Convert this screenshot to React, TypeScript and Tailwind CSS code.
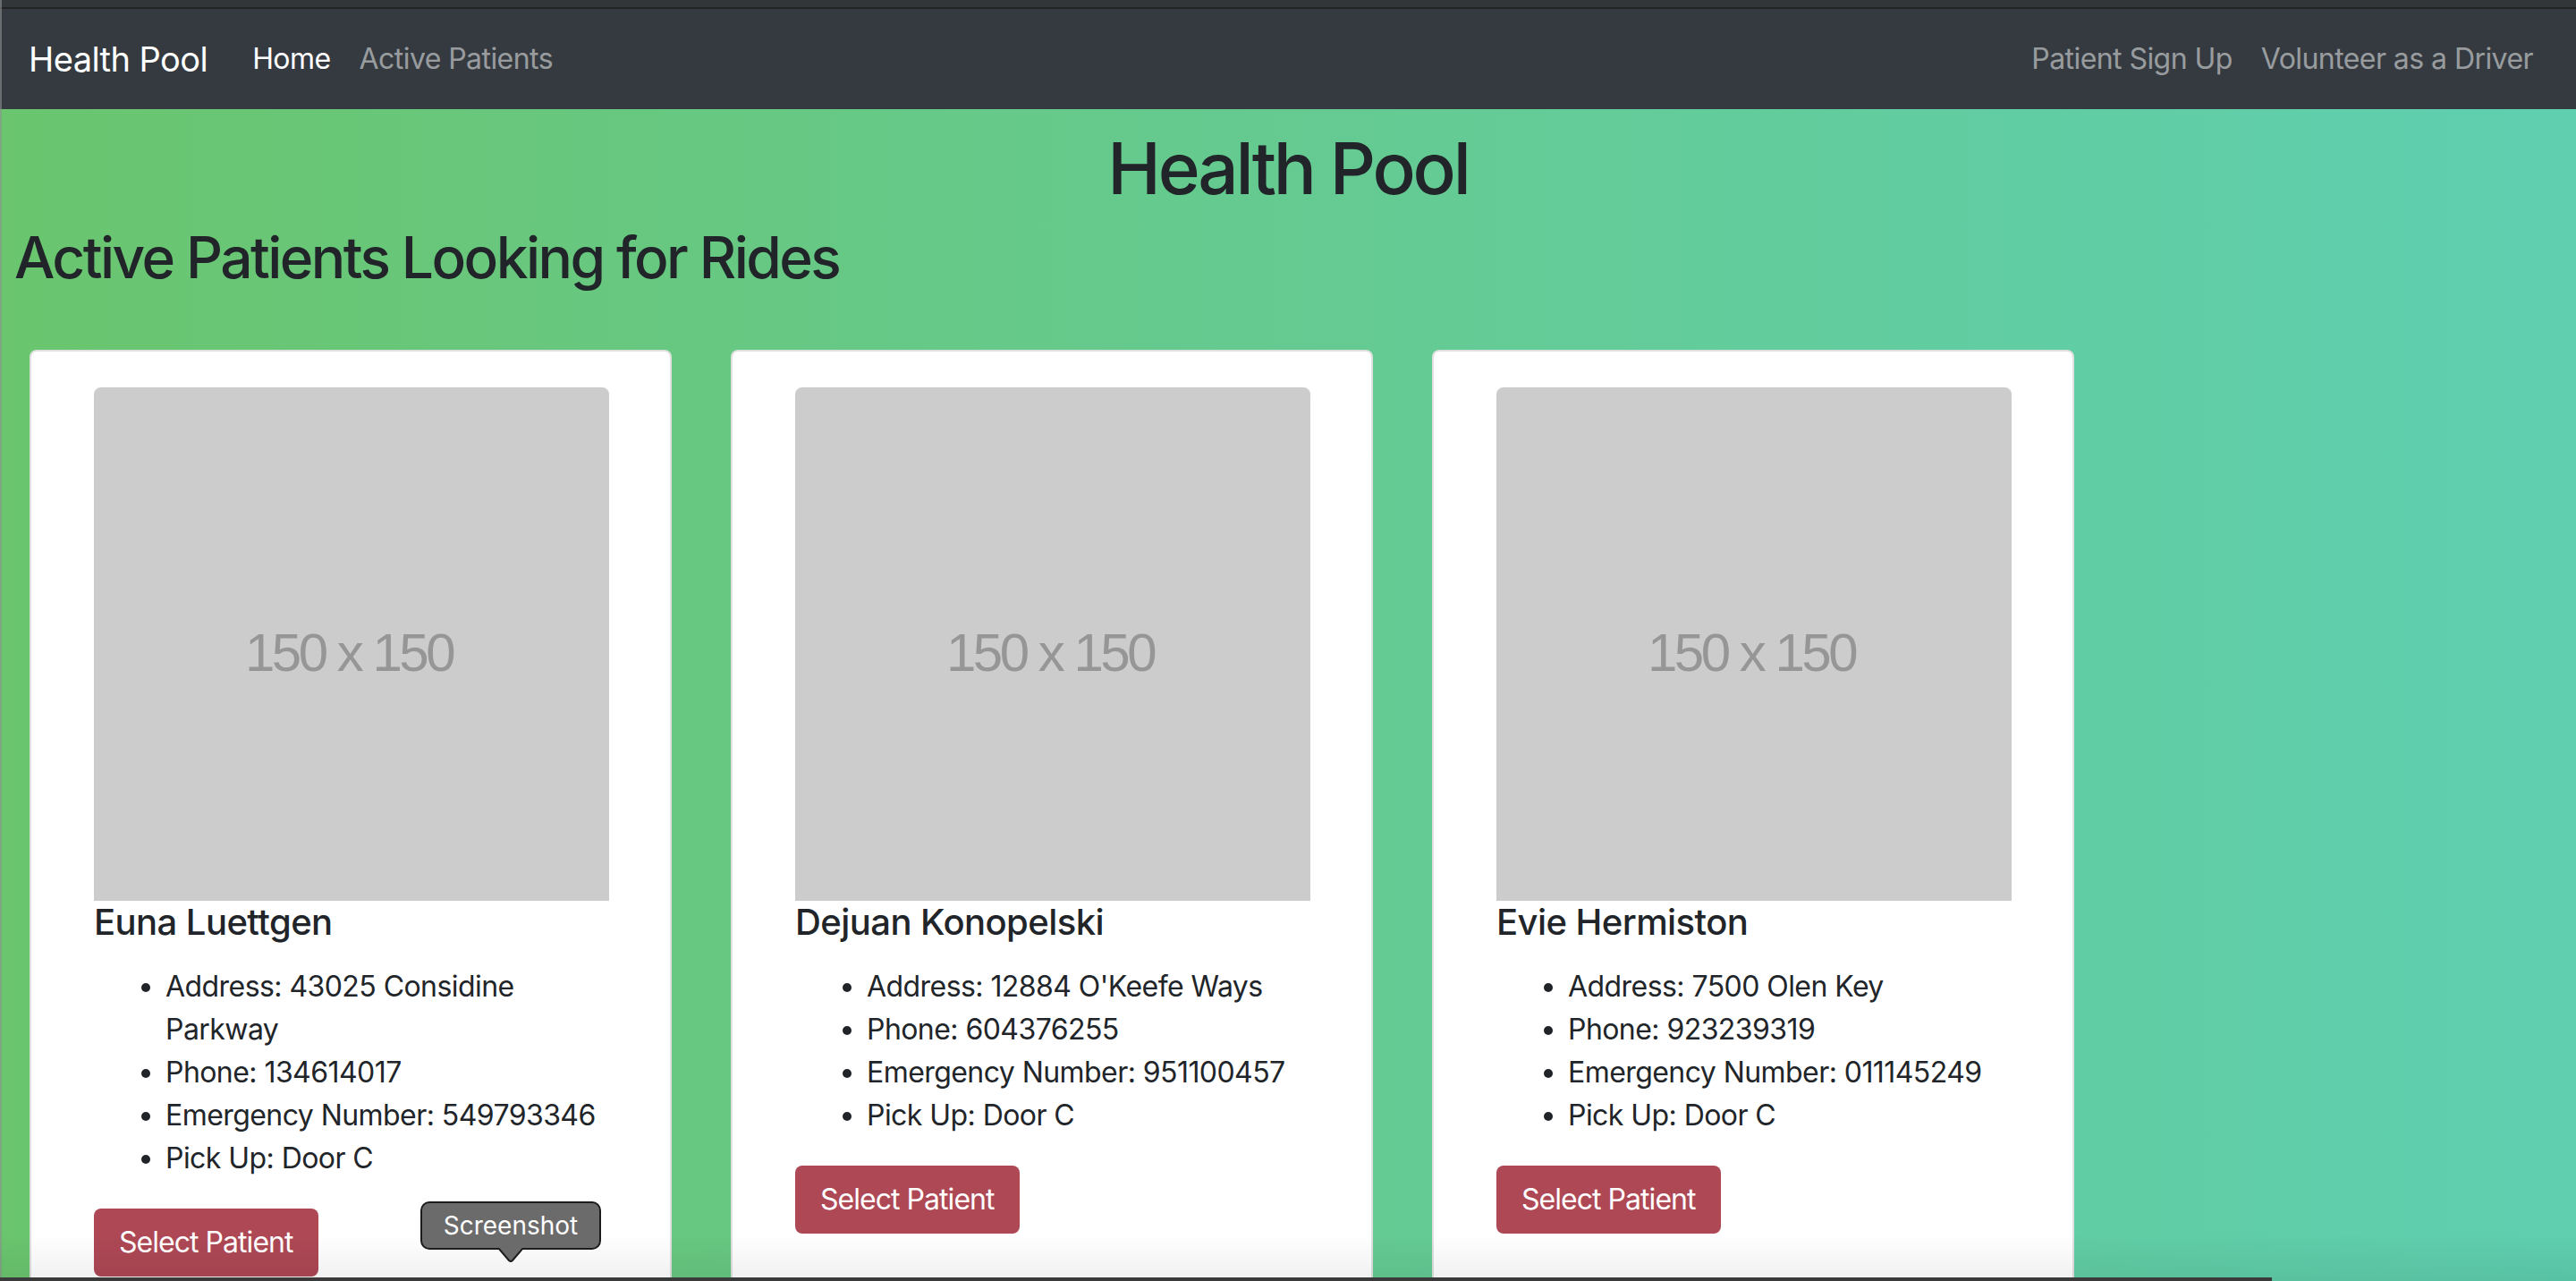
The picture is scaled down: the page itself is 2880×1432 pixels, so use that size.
import React from "react";

type Patient = {
  name: string;
  address: string;
  phone: string;
  emergency: string;
  pickup: string;
};

const patients: Patient[] = [
  {
    name: "Euna Luettgen",
    address: "43025 Considine Parkway",
    phone: "134614017",
    emergency: "549793346",
    pickup: "Door C",
  },
  {
    name: "Dejuan Konopelski",
    address: "12884 O'Keefe Ways",
    phone: "604376255",
    emergency: "951100457",
    pickup: "Door C",
  },
  {
    name: "Evie Hermiston",
    address: "7500 Olen Key",
    phone: "923239319",
    emergency: "011145249",
    pickup: "Door C",
  },
];

function PatientCard({ patient }: { patient: Patient }) {
  return (
    <div className="w-[718px] shrink-0 rounded-[8px] border-2 border-black/[0.12] bg-white px-[70px] pt-[40px] pb-[40px]">
      {/* placeholder image */}
      <div className="flex h-[574px] w-[576px] items-center justify-center rounded-t-[8px] bg-[#cccccc]">
        <span className="mt-[20px] mr-[6px] font-['Liberation_Sans',Arial,sans-serif] text-[60px] tracking-[-3.5px] text-[#969696]">
          150 x 150
        </span>
      </div>
      <h5 className="mb-[24px] text-[40px] leading-[1.2] font-medium text-[#212529]">
        {patient.name}
      </h5>
      <ul className="mb-[32px] list-disc pl-[80px] text-[32px] leading-[1.5] text-[#212529]">
        <li>Address: {patient.address}</li>
        <li>Phone: {patient.phone}</li>
        <li>Emergency Number: {patient.emergency}</li>
        <li>Pick Up: {patient.pickup}</li>
      </ul>
      <button className="h-[76px] rounded-[8px] bg-[#ae4855] px-[28px] text-[32px] tracking-[-0.03em] text-white">
        Select Patient
      </button>
    </div>
  );
}

export default function App() {
  return (
    <div className="min-h-screen bg-gradient-to-r from-[#6ac56e] to-[#5fcfb0] font-['Inter','Noto_Sans',sans-serif] tracking-[-0.035em] text-[#212529]">
      {/* window chrome strip */}
      <div className="h-[8px] bg-[#333639]"></div>
      <div className="h-[2px] bg-[#222325]"></div>

      {/* Navbar */}
      <nav className="flex h-[112px] items-center bg-[#343a40] px-[32px]">
        <span className="mr-[34px] text-[38px] text-white">Health Pool</span>
        <div className="flex items-center text-[32px]">
          <span className="px-[16px] text-white">Home</span>
          <span className="px-[16px] text-white/50">Active Patients</span>
        </div>
        <div className="ml-auto flex items-center text-[32px] text-white/50">
          <span className="px-[16px]">Patient Sign Up</span>
          <span className="px-[16px]">Volunteer as a Driver</span>
        </div>
      </nav>

      <main className="pb-[60px]">
        <h1 className="pt-[18px] text-center text-[80px] leading-[1.2] font-medium tracking-[-0.04em]">
          Health Pool
        </h1>
        <h2 className="mt-[14px] pl-[16px] text-[64px] leading-[1.2] font-medium tracking-[-0.04em]">
          Active Patients Looking for Rides
        </h2>

        {/* Patient cards */}
        <div className="mt-[64px] flex gap-[66px] pl-[33px]">
          {patients.map((p) => (
            <PatientCard key={p.name} patient={p} />
          ))}
        </div>
      </main>

      {/* left window edge */}
      <div className="pointer-events-none fixed top-0 bottom-0 left-0 w-[2px] bg-[#8f8f8f]/60"></div>

      {/* bottom shadow from screenshot overlay */}
      <div className="pointer-events-none fixed right-0 bottom-0 left-0 h-[52px] bg-gradient-to-b from-transparent to-black/[0.06]"></div>
      <div className="pointer-events-none fixed bottom-0 left-0 right-[340px] h-[4px] bg-[#3a3a3a]"></div>

      {/* Screenshot tooltip */}
      <div className="pointer-events-none fixed top-[1343px] left-[470px] flex flex-col items-center">
        <div className="flex h-[54px] w-[202px] items-center justify-center rounded-[10px] border-2 border-[#1c1c1c] bg-[#6b6b6b] text-[28px] tracking-normal text-white">
          Screenshot
        </div>
        <svg width="28" height="16" viewBox="0 0 28 16" className="-mt-[2px]">
          <path d="M0 0 L12 14 Q14 16 16 14 L28 0 Z" fill="#6b6b6b" />
          <path d="M0 0 L12 14 Q14 16 16 14 L28 0" fill="none" stroke="#1c1c1c" strokeWidth="2" />
        </svg>
      </div>
    </div>
  );
}
